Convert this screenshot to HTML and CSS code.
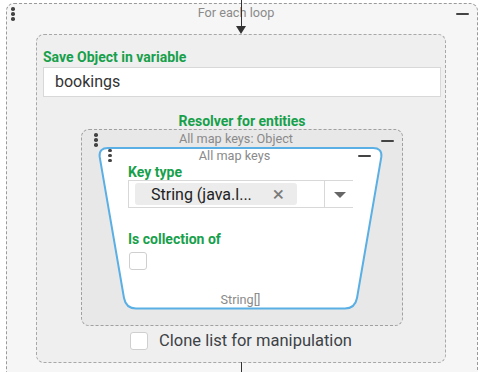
FILE: index.html
```html
<!DOCTYPE html>
<html>
<head>
<meta charset="utf-8">
<link rel="stylesheet" href="styles.css">
</head>
<body>
<div class="page">
  <div class="loop">
    <span class="dots"><i></i><i></i><i></i></span>
    <span class="minus"></span>
    <div class="title">For each loop</div>
    <div class="save">
      <div class="label">Save Object in variable</div>
      <div class="input">bookings</div>
      <div class="label center resolver">Resolver for entities</div>
      <div class="map">
        <span class="dots"><i></i><i></i><i></i></span>
        <span class="minus"></span>
        <div class="title">All map keys: Object</div>
        <div class="card">
          <svg class="shape" width="285" height="163" viewBox="0 0 285 163">
            <path d="M10,1 H275 Q284,1 283.4,9.5 L259,151 Q257,161.5 247,161.5 H38 Q28,161.5 26,151 L1.6,9.5 Q1,1 10,1 Z" fill="#fff" stroke="#5aafe4" stroke-width="2"/>
          </svg>
          <span class="dots"><i></i><i></i><i></i></span>
          <span class="minus"></span>
          <div class="title">All map keys</div>
          <div class="label">Key type</div>
          <div class="select">
            <div class="chip"><span class="chip-text">String (java.l...</span><span class="x">×</span></div>
            <div class="caret-box"><span class="caret"></span></div>
          </div>
          <div class="label coll">Is collection of</div>
          <span class="check small"></span>
          <div class="foot">String[]</div>
        </div>
      </div>
      <div class="clone"><span class="check"></span><span>Clone list for manipulation</span></div>
    </div>
  </div>
  <span class="arrow-line"></span>
  <span class="arrow-head"></span>
  <span class="bottom-line"></span>
</div>
</body>
</html>
```
FILE: styles.css
```css
html, body { margin: 0; padding: 0; background: #fff; }
body { font-family: Roboto, "Noto Sans", sans-serif; width: 483px; height: 372px; overflow: hidden; }
.page { position: relative; width: 483px; height: 372px; overflow: hidden; }
.loop {
  position: relative;
  margin: 3px 0 0 6px;
  width: 472px;
  height: 400px;
  border: 1px dashed #9a9a9a;
  border-radius: 8px;
  background: #f6f6f6;
  box-sizing: border-box;
}
.title {
  font-size: 12.7px;
  line-height: 16px;
  color: #8a8a8a;
  text-align: center;
  padding-right: 12px;
}
.loop > .title { padding-top: 1px; }
.dots { position: absolute; display: flex; flex-direction: column; gap: 1.6px; }
.dots i { display: block; width: 3.6px; height: 3.6px; border-radius: 50%; background: #444; }
.minus { position: absolute; width: 13px; height: 2px; background: #444; border-radius: 1px; }
.loop > .dots { left: 4px; top: 3px; }
.loop > .minus { right: 8px; top: 9px; }
.save {
  margin: 13px 0 0 29px;
  width: 410px;
  border: 1px dashed #a8a8a8;
  border-radius: 8px;
  background: #efefef;
  box-sizing: border-box;
  padding: 14px 4px 12px 6px;
}
.label {
  font-size: 14px;
  line-height: 16px;
  font-weight: bold;
  color: #17a04b;
}
.center { text-align: center; }
.input {
  margin-top: 2px;
  height: 30px;
  width: 398px;
  box-sizing: border-box;
  border: 1px solid #d8d8d8;
  background: #fff;
  font-size: 16px;
  line-height: 28px;
  color: #333;
  padding-left: 11px;
}
.resolver { margin-top: 16px; }
.map {
  position: relative;
  margin: 0 0 0 38px;
  width: 322px;
  height: 197px;
  border: 1px dashed #a0a0a0;
  border-radius: 8px;
  background: #e8e8e8;
  box-sizing: border-box;
  padding-top: 1px;
}
.map > .dots { left: 12px; top: 3px; }
.map > .minus { right: 8px; top: 10px; }
.card {
  position: relative;
  margin: 0 0 0 16px;
  width: 285px;
  height: 163px;
  box-sizing: border-box;
  padding: 1px 0 0 30px;
  display: flex;
  flex-direction: column;
  align-items: flex-start;
}
.card > * { position: relative; }
.card > .shape { position: absolute; left: 0; top: 0; }
.card > .dots { position: absolute; left: 10px; top: 1.5px; }
.card > .minus { position: absolute; right: 12px; top: 8px; }
.card > .title { align-self: stretch; margin-left: -30px; }
.select {
  width: 225px;
  height: 28px;
  box-sizing: border-box;
  border: 1px solid #d8d8d8;
  border-right: none;
  background: #fff;
  display: flex;
  align-items: center;
}
.chip {
  margin-left: 6px;
  width: 162px;
  height: 22px;
  background: #ececec;
  border-radius: 3px;
  display: flex;
  align-items: center;
  box-sizing: border-box;
  padding-left: 16px;
  font-size: 16px;
  color: #222;
}
.chip-text { flex: 1; }
.x { color: #7a7a7a; font-size: 21px; margin-right: 13px; line-height: 22px; }
.caret-box {
  margin-left: 27px;
  height: 26px;
  border-left: 1px solid #d8d8d8;
  display: flex;
  align-items: center;
  padding-left: 9px;
  flex: 1;
}
.caret { width: 0; height: 0; border-left: 6px solid transparent; border-right: 6px solid transparent; border-top: 6px solid #666; margin-top: 2px; }
.coll { margin-top: 23px; }
.check {
  display: block;
  width: 18px;
  height: 18px;
  box-sizing: border-box;
  border: 1px solid #cfcfcf;
  border-radius: 3px;
  background: #fff;
}
.check.small { margin-top: 5px; margin-left: 1px; }
.foot {
  margin-top: auto;
  align-self: stretch;
  margin-left: -30px;
  text-align: center;
  font-size: 12.7px;
  line-height: 16px;
  color: #8a8a8a;
  padding-bottom: 2px;
}
.clone {
  margin-top: 6px;
  display: flex;
  align-items: center;
  justify-content: center;
  gap: 11px;
  font-size: 16.5px;
  line-height: 18px;
  color: #3d4246;
  padding-right: 2px;
}
.arrow-line { position: absolute; left: 240.5px; top: 0; width: 1.5px; height: 28px; background: #333; }
.arrow-head { position: absolute; left: 236px; top: 26px; width: 0; height: 0; border-left: 5px solid transparent; border-right: 5px solid transparent; border-top: 8px solid #333; }
.bottom-line { position: absolute; left: 240.5px; top: 362px; width: 1.5px; height: 10px; background: #333; }
```
